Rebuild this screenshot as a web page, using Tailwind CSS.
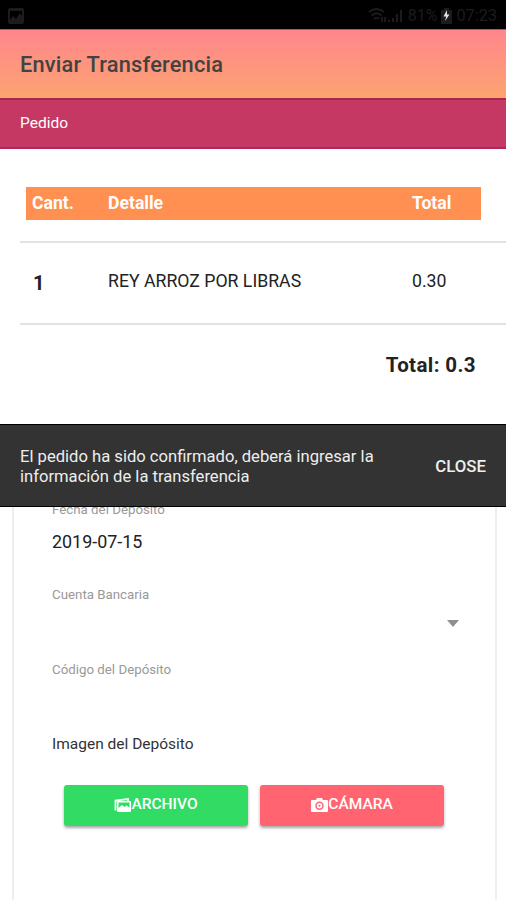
<!DOCTYPE html>
<html lang="es">
<head>
    <meta charset="UTF-8">
    <meta name="viewport" content="width=device-width, initial-scale=1.0">
    <title>Enviar Transferencia</title>
    <script src="https://cdn.jsdelivr.net/npm/@tailwindcss/browser@4"></script>
</head>
<body class="bg-white font-['Roboto',sans-serif] text-[#222]">
    <div class="relative flex flex-col w-[506px] h-[900px] overflow-hidden">
        <!-- Status bar -->
        <div class="flex items-center h-[29px] pt-[3px] pl-2 pr-[9px] bg-black text-[#1c1c1c] shrink-0">
            <svg class="w-4 h-4" viewBox="0 0 16 16">
                <path fill="currentColor" fill-rule="evenodd" d="M2 0h12a2 2 0 0 1 2 2v12a2 2 0 0 1-2 2H2a2 2 0 0 1-2-2V2a2 2 0 0 1 2-2zM2 3v9l3-4 3 3 4-6 2 3V3z"></path>
            </svg>
            <div class="flex items-center ml-auto">
                <svg class="w-[18px] h-4 mr-0.5" viewBox="0 0 18 16" fill="none" stroke="currentColor" stroke-width="1.8">
                    <path d="M1 4c5-4 10-4 15 0M3.500 7.500c3.500-3 7-3 10 0M6 11c1.500-1.500 3.500-1.500 5 0M14 9v5M17 9v5"></path>
                </svg>
                <svg class="w-[14px] h-4 mr-1.5" viewBox="0 0 14 16" fill="currentColor">
                    <path d="M0 12h2v2H0zM4 10h2v4H4zM8 6h2v8H8zM12 2h2v12h-2z"></path>
                </svg>
                <span class="pt-px text-[16px] leading-none">81%</span>
                <svg class="w-[11px] h-4 mx-1" viewBox="0 0 11 16">
                    <path fill="currentColor" d="M3 0h5v2h3v14H0V2h3z"></path>
                    <path fill="#e4e4e4" d="M6 2L2.500 8.500h2.700L4 13l4.500-6.500H6z"></path>
                </svg>
                <span class="pt-px text-[16.3px] leading-none">07:23</span>
            </div>
        </div>

        <!-- Title -->
        <header class="flex items-center h-[69px] pt-0.5 px-5 shrink-0 border-t border-[#b05a62] bg-linear-to-b from-[#ff868c] to-[#fca36f]">
            <h1 class="text-[21.8px] font-medium text-[#424242] tracking-[0.2px]">Enviar Transferencia</h1>
        </header>
        <div class="flex items-center h-[51px] px-5 shrink-0 border-t-2 border-b-2 border-t-[#a32850] border-b-[#b52357] bg-[#c63864] text-white text-[15.5px]">Pedido</div>

        <!-- Order detail -->
        <section class="shrink-0 pt-[38px]">
            <div class="flex items-center h-[33px] ml-[26px] mr-[25px] pl-1.5 bg-[#ff9052] text-white text-[17.6px] font-bold">
                <span class="w-[76px]">Cant.</span>
                <span class="w-[304px]">Detalle</span>
                <span>Total</span>
            </div>
            <div class="flex items-center h-[84px] mt-[21px] ml-5 pl-3 border-y-2 border-[#e2e2e2] text-[17.7px]">
                <span class="w-[76px] pl-px text-xl font-bold">1</span>
                <span class="w-[304px] pb-1">REY ARROZ POR LIBRAS</span>
                <span class="pb-1">0.30</span>
            </div>
            <div class="pt-[25px] pr-[30px] text-right text-[20.5px] leading-[30px] font-bold tracking-[0.4px]">Total: 0.3</div>
        </section>

        <!-- Deposit form -->
        <section class="grow mt-[48px] ml-3 mr-[9px] px-[38px] border-x-2 border-[#eee]">
            <div class="pt-[72px] text-[13.3px] leading-5 text-[#999]">Fecha del Depósito</div>
            <div class="mt-[10px] text-[17.9px] leading-6">2019-07-15</div>
            <div class="mt-[31px] text-[13.3px] leading-5 text-[#999]">Cuenta Bancaria</div>
            <div class="flex justify-end mt-[15px] -mr-0.5 h-2">
                <svg class="w-3 h-[7px]" viewBox="0 0 12 7"><path fill="#8f8f8f" d="M0 0h12L6 7z"></path></svg>
            </div>
            <div class="mt-[32px] text-[13.3px] leading-5 text-[#999]">Código del Depósito</div>
            <div class="mt-[54px] text-[15.5px] leading-5 text-[#333]">Imagen del Depósito</div>
            <div class="flex gap-3 mt-[31px] ml-3">
                <button class="flex items-center justify-center w-[184px] h-[41px] pb-0.5 rounded-[3px] bg-[#32db64] text-white text-[15.5px] font-medium shadow-[0_2px_3px_rgba(0,0,0,0.35)]">
                    <svg class="w-[17px] h-[14px]" viewBox="0 0 17 14">
                        <path fill="none" stroke="currentColor" stroke-width="1.800" d="M1.500 12.500V2.500L14 1v2"></path>
                        <path fill="currentColor" fill-rule="evenodd" d="M4 3h12a1 1 0 0 1 1 1v9a1 1 0 0 1-1 1H4a1 1 0 0 1-1-1V4a1 1 0 0 1 1-1zM4.500 4.500V10L8 7l2.500 2 2-1.500 3 2v-5z"></path>
                    </svg>
                    ARCHIVO
                </button>
                <button class="flex items-center justify-center w-[184px] h-[41px] pb-0.5 rounded-[3px] bg-[#ff6470] text-white text-[15.5px] font-medium shadow-[0_2px_3px_rgba(0,0,0,0.35)]">
                    <svg class="w-[17px] h-[14px]" viewBox="0 0 17 14">
                        <path fill="currentColor" d="M5 2l1-2h5l1 2h4a1 1 0 0 1 1 1v10a1 1 0 0 1-1 1H1a1 1 0 0 1-1-1V3a1 1 0 0 1 1-1z"></path>
                        <circle cx="8.500" cy="7.800" r="3.500" fill="none" stroke="#ff6470" stroke-width="1.500"></circle>
                        <circle cx="8.500" cy="7.800" r="1" fill="#ff6470"></circle>
                    </svg>
                    CÁMARA
                </button>
            </div>
        </section>

        <!-- Toast -->
        <div class="absolute left-0 top-[424px] flex items-center justify-between w-full h-[83px] px-5 pt-0.5 border-y border-black bg-[#333] text-[#eee]">
            <p class="w-[370px] text-[16.6px] leading-5">El pedido ha sido confirmado, deberá ingresar la información de la transferencia</p>
            <button class="text-[16.8px] font-medium">CLOSE</button>
        </div>
    </div>
</body>
</html>
